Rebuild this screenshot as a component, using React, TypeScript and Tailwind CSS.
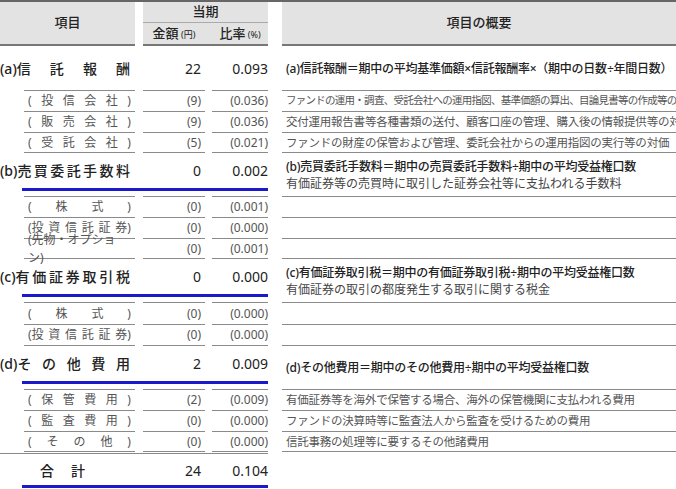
import React from "react";

type Sub = { label: string[]; amt: string; rate: string; desc?: string };
type Main = { label: string[]; amt: string; rate: string; desc: string; desc2?: string; blue: boolean; h: string; subs: Sub[]; subH: string };

const data: Main[] = [
  {
    label: ["(a)信", "託", "報", "酬"], amt: "22", rate: "0.093", blue: false, h: "h-[44px]", subH: "h-[21px]",
    desc: "(a)信託報酬＝期中の平均基準価額×信託報酬率×（期中の日数÷年間日数）",
    subs: [
      { label: ["(", "投", "信", "会", "社", ")"], amt: "(9)", rate: "(0.036)", desc: "ファンドの運用・調査、受託会社への運用指図、基準価額の算出、目論見書等の作成等の対価" },
      { label: ["(", "販", "売", "会", "社", ")"], amt: "(9)", rate: "(0.036)", desc: "交付運用報告書等各種書類の送付、顧客口座の管理、購入後の情報提供等の対価" },
      { label: ["(", "受", "託", "会", "社", ")"], amt: "(5)", rate: "(0.021)", desc: "ファンドの財産の保管および管理、委託会社からの運用指図の実行等の対価" },
    ],
  },
  {
    label: ["(b)売", "買", "委", "託", "手", "数", "料"], amt: "0", rate: "0.002", blue: true, h: "h-[43px]", subH: "h-[21px]",
    desc: "(b)売買委託手数料＝期中の売買委託手数料÷期中の平均受益権口数",
    desc2: "有価証券等の売買時に取引した証券会社等に支払われる手数料",
    subs: [
      { label: ["(", "株", "式", ")"], amt: "(0)", rate: "(0.001)" },
      { label: ["(投", "資", "信", "託", "証", "券)"], amt: "(0)", rate: "(0.000)" },
      { label: ["(先物・オプション)"], amt: "(0)", rate: "(0.001)" },
    ],
  },
  {
    label: ["(c)有", "価", "証", "券", "取", "引", "税"], amt: "0", rate: "0.000", blue: true, h: "h-[43px]", subH: "h-[22px]",
    desc: "(c)有価証券取引税＝期中の有価証券取引税÷期中の平均受益権口数",
    desc2: "有価証券の取引の都度発生する取引に関する税金",
    subs: [
      { label: ["(", "株", "式", ")"], amt: "(0)", rate: "(0.000)" },
      { label: ["(投", "資", "信", "託", "証", "券)"], amt: "(0)", rate: "(0.000)" },
    ],
  },
  {
    label: ["(d)そ", "の", "他", "費", "用"], amt: "2", rate: "0.009", blue: true, h: "h-[43px]", subH: "h-[21px]",
    desc: "(d)その他費用＝期中のその他費用÷期中の平均受益権口数",
    subs: [
      { label: ["(", "保", "管", "費", "用", ")"], amt: "(2)", rate: "(0.009)", desc: "有価証券等を海外で保管する場合、海外の保管機関に支払われる費用" },
      { label: ["(", "監", "査", "費", "用", ")"], amt: "(0)", rate: "(0.000)", desc: "ファンドの決算時等に監査法人から監査を受けるための費用" },
      { label: ["(", "そ", "の", "他", ")"], amt: "(0)", rate: "(0.000)", desc: "信託事務の処理等に要するその他諸費用" },
    ],
  },
];

const line = "border-[#8a8a8a]";

function Spread({ parts, className }: { parts: string[]; className: string }) {
  return (
    <div className={`flex ${parts.length > 1 ? "justify-between" : "justify-center"} ${className}`}>
      {parts.map((p, i) => (
        <span key={i}>{p}</span>
      ))}
    </div>
  );
}

function SubRow({ s, h, first, last }: { s: Sub; h: string; first: boolean; last: boolean }) {
  const b = `border-t ${last ? "border-b" : ""} ${line}`;
  return (
    <div className={`flex ${h} text-[#555] text-[12px]`}>
      <div className="w-[135px] pl-[24px] flex">
        <div className={`flex-1 flex items-center ${b} px-[4px]`}>
          <Spread parts={s.label} className="w-full" />
        </div>
      </div>
      <div className={`ml-[8px] w-[62px] flex items-center justify-end pr-[4px] ${b}`}>{s.amt}</div>
      <div className={`ml-[7px] w-[56px] flex items-center justify-end ${b}`}>{s.rate}</div>
      <div className={`ml-[14px] w-[394px] pl-[4px] flex items-center ${b} whitespace-nowrap overflow-hidden ${first ? "text-[10.5px] tracking-[-0.07em]" : "text-[11.5px] tracking-[-0.02em]"}`}>{s.desc}</div>
    </div>
  );
}

function MainRow({ m }: { m: Main }) {
  return (
    <div>
      <div className={`flex ${m.h} text-[#222]`}>
        <div className="w-[276px] flex flex-col">
          <div className="flex flex-1 items-center text-[14px]">
            <Spread parts={m.label} className="w-[130px] font-medium" />
            <div className="ml-[13px] w-[62px] text-right pr-[4px]">{m.amt}</div>
            <div className="ml-[7px] w-[56px] text-right">{m.rate}</div>
          </div>
          {m.blue && <div className="ml-[22px] w-[246px] h-[3px] bg-[#1a1acc] mb-[5px]" />}
        </div>
        <div className="ml-[10px] w-[390px] flex flex-col justify-center leading-[17px]">
          <div className="text-[12px] font-medium whitespace-nowrap tracking-[-0.02em]">{m.desc}</div>
          {m.desc2 && <div className="text-[12px] text-[#444] whitespace-nowrap">{m.desc2}</div>}
        </div>
      </div>
      {m.subs.map((s, i) => (
        <SubRow key={i} s={s} h={m.subH} first={i === 0 && m.subs.length === 3 && !m.blue} last={i === m.subs.length - 1} />
      ))}
    </div>
  );
}

export default function App() {
  return (
    <div className="w-[676px] h-[489px] bg-white overflow-hidden" style={{ fontFamily: '"Noto Sans", "Noto Sans CJK JP", sans-serif' }}>
      <div className="flex h-[46px] border-t-2 border-[#666] text-[13px] text-[#222] font-medium">
        <div className="w-[135px] bg-[#e3e3e3] border-b-2 border-[#777] flex items-center justify-center">項目</div>
        <div className="ml-[8px] w-[125px] bg-[#e3e3e3] border-b-2 border-[#777] flex flex-col">
          <div className="h-[21px] flex items-center justify-center border-b border-[#aaa]">当期</div>
          <div className="flex-1 flex items-center">
            <div className="w-[62px] text-center">金額<span className="text-[9px] font-normal"> (円)</span></div>
            <div className="ml-[7px] w-[56px] text-center">比率<span className="text-[9px] font-normal"> (%)</span></div>
          </div>
        </div>
        <div className="ml-[14px] flex-1 bg-[#e3e3e3] border-b-2 border-[#777] flex items-center justify-center">項目の概要</div>
      </div>
      {data.map((m, i) => (
        <MainRow key={i} m={m} />
      ))}
      <div className="h-[3px] w-[268px] border-t border-[#8a8a8a] mt-[1px]" />
      <div className="w-[276px] flex flex-col h-[34px]">
        <div className="flex flex-1 items-center text-[14px] text-[#222]">
          <div className="w-[135px] pl-[40px] pr-[50px] flex justify-between font-medium"><span>合</span><span>計</span></div>
          <div className="ml-[8px] w-[62px] text-right pr-[4px]">24</div>
          <div className="ml-[7px] w-[56px] text-right">0.104</div>
        </div>
        <div className="ml-[22px] w-[246px] h-[3px] bg-[#1a1acc] mb-[2px]" />
      </div>
    </div>
  );
}
